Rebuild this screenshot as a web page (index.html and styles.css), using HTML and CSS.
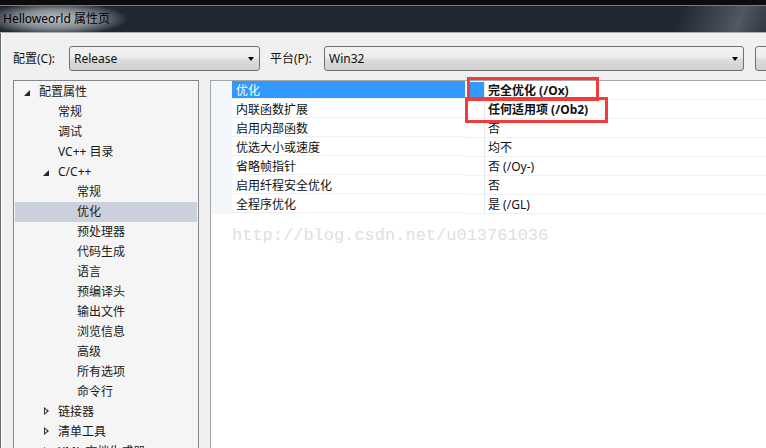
FILE: index.html
```html
<!DOCTYPE html>
<html>
<head>
    <title>Helloweorld 属性页</title>
    <meta charset="utf-8">
    <link rel="stylesheet" href="styles.css">
</head>
<body>
    <div class="frame-top"></div>
    <div class="titlebar"><span class="title">Helloweorld 属性页</span></div>

    <div class="window">
        <div class="toolbar">
            <span class="field-label label-config">配置(C):</span>
            <div class="combo combo-config"><span>Release</span><i class="combo-arrow"></i></div>
            <span class="field-label label-platform">平台(P):</span>
            <div class="combo combo-platform"><span>Win32</span><i class="combo-arrow"></i></div>
            <div class="combo combo-button"></div>
        </div>

        <div class="panes">
            <ul class="tree">
                <li class="node lvl-0"><i class="exp open"></i>配置属性</li>
                <li class="node lvl-1"><i class="exp"></i>常规</li>
                <li class="node lvl-1"><i class="exp"></i>调试</li>
                <li class="node lvl-1"><i class="exp"></i>VC++ 目录</li>
                <li class="node lvl-1"><i class="exp open"></i>C/C++</li>
                <li class="node lvl-2"><i class="exp"></i>常规</li>
                <li class="node lvl-2 selected"><i class="exp"></i>优化</li>
                <li class="node lvl-2"><i class="exp"></i>预处理器</li>
                <li class="node lvl-2"><i class="exp"></i>代码生成</li>
                <li class="node lvl-2"><i class="exp"></i>语言</li>
                <li class="node lvl-2"><i class="exp"></i>预编译头</li>
                <li class="node lvl-2"><i class="exp"></i>输出文件</li>
                <li class="node lvl-2"><i class="exp"></i>浏览信息</li>
                <li class="node lvl-2"><i class="exp"></i>高级</li>
                <li class="node lvl-2"><i class="exp"></i>所有选项</li>
                <li class="node lvl-2"><i class="exp"></i>命令行</li>
                <li class="node lvl-1"><i class="exp closed"></i>链接器</li>
                <li class="node lvl-1"><i class="exp closed"></i>清单工具</li>
                <li class="node lvl-1"><i class="exp closed"></i>XML 文档生成器</li>
            </ul>

            <div class="grid">
                <div class="prop selected">
                    <div class="gutter"></div>
                    <div class="name">优化</div>
                    <div class="spacer"><i class="marker"></i></div>
                    <div class="value bold">完全优化 (/Ox)</div>
                </div>
                <div class="prop">
                    <div class="gutter"></div>
                    <div class="name">内联函数扩展</div>
                    <div class="spacer"></div>
                    <div class="value bold">任何适用项 (/Ob2)</div>
                </div>
                <div class="prop">
                    <div class="gutter"></div>
                    <div class="name">启用内部函数</div>
                    <div class="spacer"></div>
                    <div class="value">否</div>
                </div>
                <div class="prop">
                    <div class="gutter"></div>
                    <div class="name">优选大小或速度</div>
                    <div class="spacer"></div>
                    <div class="value">均不</div>
                </div>
                <div class="prop">
                    <div class="gutter"></div>
                    <div class="name">省略帧指针</div>
                    <div class="spacer"></div>
                    <div class="value">否 (/Oy-)</div>
                </div>
                <div class="prop">
                    <div class="gutter"></div>
                    <div class="name">启用纤程安全优化</div>
                    <div class="spacer"></div>
                    <div class="value">否</div>
                </div>
                <div class="prop">
                    <div class="gutter"></div>
                    <div class="name">全程序优化</div>
                    <div class="spacer"></div>
                    <div class="value">是 (/GL)</div>
                </div>

                <div class="watermark">http://blog.csdn.net/u013761036</div>

                <!-- annotation boxes drawn over the grid -->
                <div class="mark mark-1"></div>
                <div class="mark mark-2"></div>
            </div>
        </div>
    </div>
</body>
</html>
```

FILE: styles.css
```css
body {
    margin: 0;
    width: 766px;
    height: 448px;
    overflow: hidden;
    background: #0c0c0c;
    font-family: "Noto Sans", "Noto Sans CJK SC", sans-serif;
    font-size: 12px;
    color: #111;
}

.frame-top {
    height: 5px;
    background: #0c0c0c;
    border-bottom: 1px solid #767c84;
}
.titlebar {
    height: 26px;
    border-bottom: 1px solid #a9aeb3;
    background:
        radial-gradient(ellipse 72px 17px at 56px 13px, rgba(200,204,208,.95) 0%, rgba(165,170,176,.75) 55%, rgba(40,48,58,0) 100%),
        linear-gradient(110deg, rgba(0,0,0,0) 88%, rgba(95,100,108,.8) 96%, rgba(60,66,74,.6) 100%),
        #1f2731;
    display: flex;
    align-items: center;
}
.title {
    margin-left: 3px;
    line-height: 16px;
    color: #000;
}

.window {
    height: 415px;
    background: #f0f0f0;
    border-left: 1px solid #6a6a6a;
    box-shadow: inset 1px 0 #ffffff;
    padding: 13px 0 0 12px;
    box-sizing: border-box;
}

.toolbar {
    display: flex;
    align-items: center;
    height: 25px;
    white-space: nowrap;
}
.field-label { line-height: 16px; flex-shrink: 0; }
.label-config { width: 56px; }
.label-platform { width: 54px; margin-left: 10px; }
.combo {
    position: relative;
    height: 25px;
    box-sizing: border-box;
    border: 1px solid #707070;
    border-radius: 3px;
    background: linear-gradient(#f3f3f3 0%, #ececec 48%, #dedede 52%, #d0d0d0 100%);
    display: flex;
    align-items: center;
    padding-left: 4px;
    flex-shrink: 0;
}
.combo-config { width: 191px; }
.combo-platform { width: 420px; }
.combo-button { width: 80px; margin-left: 11px; }
.combo-arrow {
    position: absolute;
    right: 5px;
    top: 10px;
    width: 0;
    height: 0;
    border-left: 3.5px solid transparent;
    border-right: 3.5px solid transparent;
    border-top: 4px solid #000;
}

.panes {
    display: flex;
    margin-top: 9px;
    height: 380px;
}

.tree {
    list-style: none;
    margin: 0;
    padding: 1px 0 0;
    width: 186px;
    flex-shrink: 0;
    box-sizing: border-box;
    border: 1px solid #838790;
    background: #f5f5f5;
    overflow: hidden;
}
.node {
    height: 20px;
    line-height: 20px;
    display: flex;
    align-items: center;
    white-space: nowrap;
    color: #1a1a1a;
}
.lvl-0 { padding-left: 6px; }
.lvl-1 { padding-left: 25px; }
.lvl-2 { padding-left: 44px; }
.node.selected {
    background: #cccfdc;
    margin: 0 1px;
    padding-left: 43px;
}
.exp {
    width: 19px;
    height: 20px;
    flex-shrink: 0;
    position: relative;
}
.exp.open::after {
    content: "";
    position: absolute;
    left: 4px;
    top: 8px;
    width: 0;
    height: 0;
    border-left: 6px solid transparent;
    border-bottom: 6px solid #262626;
}
.exp.closed::after {
    content: "";
    position: absolute;
    left: 5px;
    top: 5px;
    width: 0;
    height: 0;
    border-top: 4.5px solid transparent;
    border-bottom: 4.5px solid transparent;
    border-left: 5px solid #303030;
}
.exp.closed::before {
    content: "";
    position: absolute;
    left: 6px;
    top: 7px;
    width: 0;
    height: 0;
    border-top: 2.5px solid transparent;
    border-bottom: 2.5px solid transparent;
    border-left: 2.8px solid #f5f5f5;
    z-index: 1;
}

.grid {
    position: relative;
    flex: 1;
    margin-left: 11px;
    border-top: 1px solid #a5a5a5;
    border-left: 1px solid #a5a5a5;
    background: #fff;
}
.prop {
    display: flex;
    height: 19px;
}
.prop .gutter {
    width: 21px;
    background: #f2f5fa;
    flex-shrink: 0;
}
.prop .name,
.prop .spacer,
.prop .value {
    height: 18px;
    line-height: 20px;
    overflow: hidden;
    border-bottom: 1px solid #eef0f4;
    white-space: nowrap;
}
.prop .name {
    width: 233px;
    padding-left: 4px;
    box-sizing: border-box;
    flex-shrink: 0;
}
.prop .spacer {
    width: 19px;
    flex-shrink: 0;
    border-right: 1px solid #e6e9ef;
    position: relative;
}
.prop .value {
    flex: 1;
    padding-left: 3px;
}
.prop .value.bold { font-weight: bold; }
.prop.selected .name {
    background: #3399ff;
    color: #fff;
}
.marker {
    position: absolute;
    left: 3px;
    top: 1px;
    width: 16px;
    height: 16px;
    background: #3399ff;
}

.watermark {
    margin: 12px 0 0 21px;
    font-family: "Liberation Mono", monospace;
    font-size: 17px;
    line-height: 20px;
    color: #e0e0e0;
}

.mark {
    position: absolute;
    box-sizing: border-box;
    border: 3px solid #f43b3b;
}
.mark-1 { left: 256px; top: -4px; width: 132px; height: 24px; }
.mark-2 { left: 254px; top: 16px; width: 143px; height: 26px; }
```
